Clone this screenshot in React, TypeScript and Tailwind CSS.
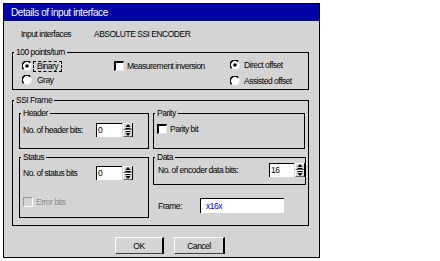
const font = "font-['Liberation_Sans',Arial,sans-serif] text-[8.5px] tracking-[-0.5px] leading-[10px] text-black"

function Radio({ checked }: { checked?: boolean }) {
  return (
    <svg width="10" height="10" viewBox="0 0 10 10" className="shrink-0">
      <circle cx="5" cy="5" r="4.3" fill="#ffffff" />
      <path d="M1.6 8.2 A4.3 4.3 0 0 1 8.2 1.6" fill="none" stroke="#000" strokeWidth="1.6" />
      <path d="M8.4 2 A4.3 4.3 0 0 1 2 8.4" fill="none" stroke="#e8e8e8" strokeWidth="1" />
      {checked && <circle cx="5" cy="5" r="1.8" fill="#000" />}
    </svg>
  )
}

function Check({ disabled }: { disabled?: boolean }) {
  return (
    <span
      className={
        disabled
          ? 'h-[10px] w-[10px] shrink-0 border-t-[1.5px] border-l-[1.5px] border-r border-b border-t-[#9a9a9a] border-l-[#9a9a9a] border-r-white border-b-white bg-[#d4d4d4]'
          : 'h-[10px] w-[10px] shrink-0 border-t-[2px] border-l-[2px] border-r border-b border-t-black border-l-black border-r-[#e8e8e8] border-b-[#e8e8e8] bg-white'
      }
    />
  )
}

function Arrow({ up }: { up?: boolean }) {
  return (
    <span className="flex h-[7px] w-full items-center justify-center border-t border-l border-t-white border-l-white border-b border-b-[#606060] bg-[#d4d4d4]">
      <svg width="6" height="5" viewBox="0 0 6 5">
        {up ? (
          <>
            <path d="M3 0 L5.5 3 L0.5 3 Z" fill="#000" />
            <rect x="0.5" y="4" width="5" height="1" fill="#000" />
          </>
        ) : (
          <>
            <rect x="0.5" y="0" width="5" height="1" fill="#000" />
            <path d="M0.5 2 L5.5 2 L3 5 Z" fill="#000" />
          </>
        )}
      </svg>
    </span>
  )
}

function SpinBox({ value, wide }: { value: string; wide?: boolean }) {
  return (
    <div className="flex h-[14px] shrink-0">
      <div
        className={
          (wide ? 'w-[26px] ' : 'w-[25px] ') +
          'h-[14px] border-t border-l border-black bg-white pl-[1px] leading-[13px]'
        }
      >
        {value}
      </div>
      <div className="ml-px flex h-[14px] w-[10px] flex-col border-r border-black">
        <Arrow up />
        <Arrow />
      </div>
    </div>
  )
}

function Legend({ children }: { children: string }) {
  return <legend className="ml-px px-[2px] leading-[10px]">{children}</legend>
}

export default function App() {
  return (
    <div className={'min-h-[261px] bg-white p-[3px] ' + font}>
      <div className="flex h-[255px] w-[317px] flex-col border border-black bg-[#d4d4d4]">
        {/* Title bar */}
        <div className="h-[17px] shrink-0 bg-[#0000a8] pl-[7px] text-[10px] leading-[17px] tracking-[-0.4px] text-white">
          Details of input interface
        </div>

        <div className="flex flex-col pl-[8px]">
          <div className="mt-[8px] flex h-[10px] pl-[9px]">
            <span className="w-[73px]">Input interfaces</span>
            <span>ABSOLUTE SSI ENCODER</span>
          </div>

          {/* 100 points/turn */}
          <fieldset className="mt-[8px] w-[297px] border border-black">
            <Legend>100 points/turn</Legend>
            <div className="flex h-[32px]">
              <div className="flex w-[101px] flex-col pt-[2px] pl-[9px]">
                <div className="flex h-[14px] items-center">
                  <Radio checked />
                  <span className="ml-px border border-dashed border-black px-[3px] leading-[9px]">Binary</span>
                </div>
                <div className="flex h-[14px] items-center">
                  <Radio />
                  <span className="ml-px border border-transparent px-[3px] leading-[9px]">Gray</span>
                </div>
              </div>
              <div className="flex w-[116px] flex-col pt-[2px]">
                <div className="flex h-[14px] items-center gap-[3px]">
                  <Check />
                  <span>Measurement inversion</span>
                </div>
              </div>
              <div className="flex flex-col">
                <div className="flex h-[16px] items-center gap-[4px]">
                  <Radio checked />
                  <span>Direct offset</span>
                </div>
                <div className="flex h-[16px] items-center gap-[4px]">
                  <Radio />
                  <span>Assisted offset</span>
                </div>
              </div>
            </div>
          </fieldset>

          {/* SSI Frame */}
          <fieldset className="mt-[5px] w-[297px] border border-black">
            <Legend>SSI Frame</Legend>
            <div className="flex gap-[4px] pt-[3px] pb-[7px] pl-[6px]">
              <div className="flex w-[130px] flex-col gap-[3px]">
                <fieldset className="border border-black">
                  <Legend>Header</Legend>
                  <div className="flex h-[30px] items-start pt-[5px] pl-[3px]">
                    <span className="w-[73px] leading-[14px]">No. of header bits:</span>
                    <SpinBox value="0" wide />
                  </div>
                </fieldset>
                <fieldset className="border border-black">
                  <Legend>Status</Legend>
                  <div className="flex h-[55px] flex-col pt-[4px] pl-[3px]">
                    <div className="flex items-start">
                      <span className="w-[73px] leading-[14px]">No. of status bits</span>
                      <SpinBox value="0" wide />
                    </div>
                    <div className="mt-[17px] flex items-center gap-[3px] text-[#8c8c8c]">
                      <Check disabled />
                      <span>Error bits</span>
                    </div>
                  </div>
                </fieldset>
              </div>

              <div className="flex w-[152px] flex-col">
                <fieldset className="border border-black">
                  <Legend>Parity</Legend>
                  <div className="flex h-[30px] items-start pt-[6px] pl-[3px]">
                    <div className="flex items-center gap-[3px]">
                      <Check />
                      <span>Parity bit</span>
                    </div>
                  </div>
                </fieldset>
                <fieldset className="mt-[3px] border border-black">
                  <Legend>Data</Legend>
                  <div className="flex h-[22px] items-start pt-px pl-[4px]">
                    <span className="w-[111px] pt-[2px] leading-[10px]">No. of encoder data bits:</span>
                    <SpinBox value="16" />
                  </div>
                </fieldset>
                <div className="mt-[13px] flex h-[15px] items-center pl-[5px]">
                  <span className="w-[42px]">Frame:</span>
                  <div className="h-[15px] w-[84px] border-t border-l border-black bg-white pl-[5px] leading-[14px] text-[#0000e0]">
                    x16x
                  </div>
                </div>
              </div>
            </div>
          </fieldset>

          {/* Buttons */}
          <div className="mt-[11px] ml-[103px] flex gap-[10px]">
            <button
              type="button"
              className="h-[17px] w-[49px] border-t border-l border-t-white border-l-white border-r-2 border-b border-r-black border-b-[#404040] bg-[#d4d4d4] leading-[14px]"
            >
              OK
            </button>
            <button
              type="button"
              className="h-[17px] w-[51px] border-t border-l border-t-white border-l-white border-r-2 border-b border-r-black border-b-[#404040] bg-[#d4d4d4] leading-[14px]"
            >
              Cancel
            </button>
          </div>
        </div>
      </div>
    </div>
  )
}
